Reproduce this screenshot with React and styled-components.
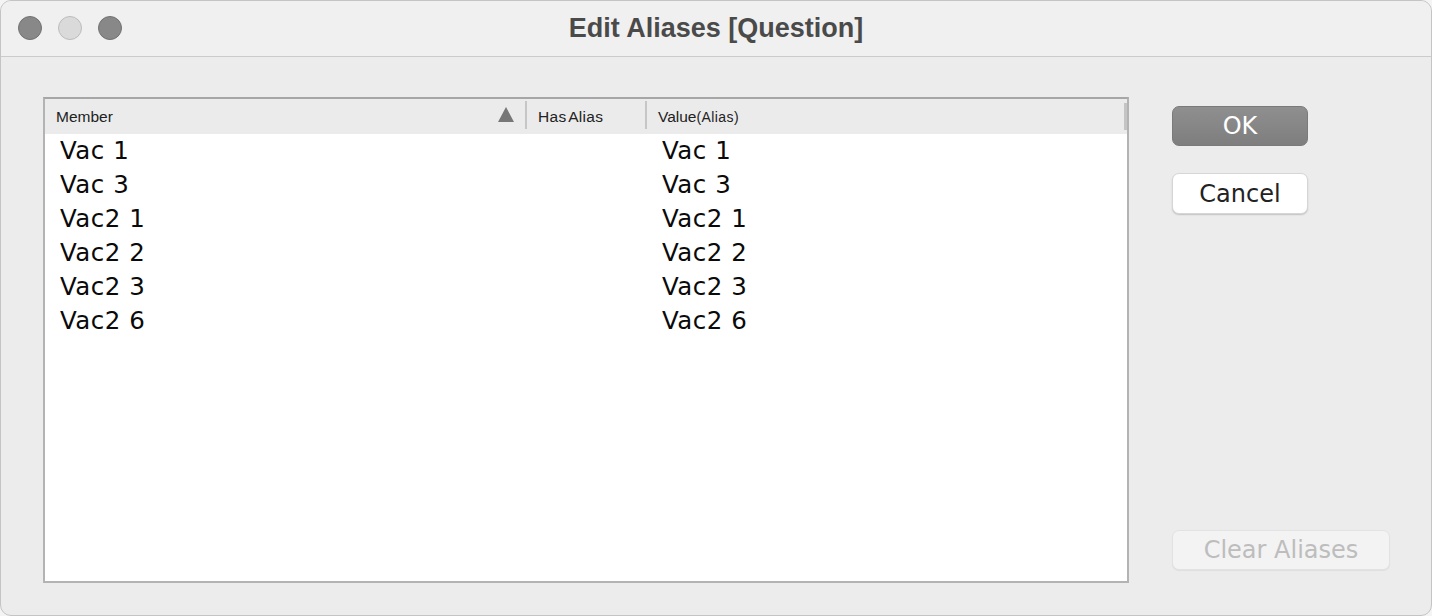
import React from "react";
import styled, { createGlobalStyle } from "styled-components";

const Global = createGlobalStyle`
  html, body { margin: 0; padding: 0; background: #f4f4f4; }
  body { font-family: "DejaVu Sans", "Liberation Sans", sans-serif; }
  * { box-sizing: border-box; }
`;

const Window = styled.div`
  width: 1432px;
  height: 616px;
  background: #ececec;
  border: 1px solid #c4c4c4;
  border-radius: 11px;
  overflow: hidden;
  display: flex;
  flex-direction: column;
`;

const TitleBar = styled.div`
  position: relative;
  height: 56px;
  flex: none;
  background: #f0f0f0;
  border-bottom: 1px solid #cbcbcb;
  display: flex;
  align-items: center;
  justify-content: center;
`;

const Lights = styled.div`
  position: absolute;
  left: 17px;
  top: 15px;
  display: flex;
  gap: 16px;
`;

const Light = styled.span`
  width: 24px;
  height: 24px;
  border-radius: 50%;
  background: ${(p) => (p.$light ? "#dadada" : "#888888")};
  border: 1px solid ${(p) => (p.$light ? "#bcbcbc" : "#717171")};
`;

const Title = styled.div`
  font-family: "Liberation Sans", Arial, sans-serif;
  font-weight: bold;
  font-size: 27px;
  color: #4a4a4a;
  margin-top: -1px;
`;

const Content = styled.div`
  flex: 1;
  display: flex;
  padding: 40px 0 0 42px;
  gap: 43px;
`;

const Table = styled.div`
  width: 1086px;
  height: 486px;
  border: 2px solid #b3b3b3;
  border-top-color: #a6a6a6;
  background: #ffffff;
  display: flex;
  flex-direction: column;
`;

const HeaderRow = styled.div`
  height: 35px;
  flex: none;
  background: #ebebeb;
  display: grid;
  grid-template-columns: 480px 120px 1fr 3px;
  align-items: center;
`;

const HeadCell = styled.div`
  position: relative;
  height: 100%;
  display: flex;
  align-items: center;
  padding-left: ${(p) => p.$pad}px;
  padding-top: 1px;
  font-family: "Liberation Sans", Arial, sans-serif;
  font-size: 15.5px;
  color: #222;
  border-left: ${(p) => (p.$sep ? "2px solid #c8c8c8" : "none")};
  border-image: ${(p) =>
    p.$sep ? "linear-gradient(to bottom, transparent 3px, #c6c6c6 3px, #c6c6c6 29px, transparent 29px) 1" : "none"};
`;

const Label = styled.span`
  white-space: nowrap;
  word-spacing: ${(p) => (p.$tight ? "-2px" : "normal")};
  letter-spacing: ${(p) => (p.$tight ? "0.3px" : "0")};
`;

const Small = styled.span`
  font-size: 14px;
  letter-spacing: 0.4px;
`;

const SortArrow = styled.span`
  position: absolute;
  right: 11px;
  top: 8px;
  width: 0;
  height: 0;
  border-left: 8px solid transparent;
  border-right: 8px solid transparent;
  border-bottom: 15px solid #777;
`;

const ScrollEdge = styled.div`
  height: 27px;
  align-self: center;
  background: #c4c4c4;
`;

const Body = styled.div`
  flex: 1;
  display: flex;
  flex-direction: column;
`;

const Row = styled.div`
  height: 34px;
  padding-bottom: 2px;
  display: grid;
  grid-template-columns: 480px 120px 1fr;
  align-items: center;
  font-family: "DejaVu Sans", sans-serif;
  font-size: 24.5px;
  letter-spacing: 0.5px;
  color: #0a0a0a;
`;

const Cell = styled.div`
  padding-left: ${(p) => p.$pad}px;
  white-space: nowrap;
`;

const Side = styled.div`
  width: 220px;
  display: flex;
  flex-direction: column;
  padding-top: 9px;
`;

const Button = styled.button`
  font-family: "DejaVu Sans", sans-serif;
  font-size: 24px;
  width: ${(p) => p.$w}px;
  height: ${(p) => p.$h}px;
  margin-top: ${(p) => p.$mt}px;
  border-radius: 7px;
  padding: 0;
  display: flex;
  align-items: center;
  justify-content: center;
  cursor: default;
  ${(p) =>
    p.$variant === "primary"
      ? `
    background: linear-gradient(to bottom, #8f8f8f, #7e7e7e);
    color: #ffffff;
    border: 1px solid #7a7a7a;
  `
      : p.$variant === "disabled"
      ? `
    background: #f3f3f3;
    color: #bdbdbd;
    border: 1px solid #e2e2e2;
    box-shadow: 0 1px 1px rgba(0,0,0,0.06);
  `
      : `
    background: #ffffff;
    color: #222;
    border: 1px solid #d6d6d6;
    box-shadow: 0 1px 1.5px rgba(0,0,0,0.18);
  `}
`;

const rows = ["Vac 1", "Vac 3", "Vac2 1", "Vac2 2", "Vac2 3", "Vac2 6"];

export default function App() {
  return (
    <>
      <Global />
      <Window>
        <TitleBar>
          <Lights>
            <Light />
            <Light $light />
            <Light />
          </Lights>
          <Title>Edit Aliases [Question]</Title>
        </TitleBar>
        <Content>
          <Table>
            <HeaderRow>
              <HeadCell $pad={11}>
                <Label>Member</Label>
                <SortArrow />
              </HeadCell>
              <HeadCell $sep $pad={11}>
                <Label $tight>Has Alias</Label>
              </HeadCell>
              <HeadCell $sep $pad={11}>
                <Label>
                  Value<Small>(Alias)</Small>
                </Label>
              </HeadCell>
              <ScrollEdge />
            </HeaderRow>
            <Body>
              {rows.map((r) => (
                <Row key={r}>
                  <Cell $pad={15}>{r}</Cell>
                  <Cell $pad={0} />
                  <Cell $pad={17}>{r}</Cell>
                </Row>
              ))}
            </Body>
          </Table>
          <Side>
            <Button $variant="primary" $w={136} $h={40} $mt={0}>
              OK
            </Button>
            <Button $w={136} $h={41} $mt={27}>
              Cancel
            </Button>
            <Button $variant="disabled" $w={218} $h={40} $mt={316}>
              Clear Aliases
            </Button>
          </Side>
        </Content>
      </Window>
    </>
  );
}
